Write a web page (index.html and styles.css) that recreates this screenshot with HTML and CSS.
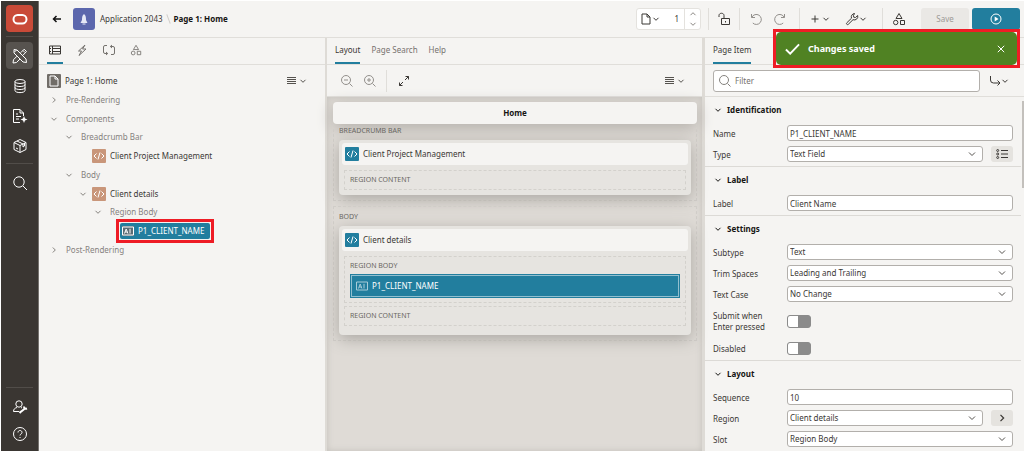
FILE: index.html
```html
<!DOCTYPE html>
<html lang="en">
<head>
	<meta charset="UTF-8">
	<title>Page 1: Home</title>
	<link rel="stylesheet" href="styles.css">
</head>
<body>
	<!-- shared icons -->
	<svg class="sprite">
		<symbol id="chev" viewBox="0 0 8 8"><path d="M1.500 2.800 4 5.300 6.500 2.800"/></symbol>
		<symbol id="chev-right" viewBox="0 0 8 8"><path d="M2.800 1.500 5.300 4 2.800 6.500"/></symbol>
		<symbol id="code" viewBox="0 0 14 14"><path d="M4.500 4.500 2 7l2.500 2.500M9.500 4.500 12 7 9.500 9.500M8 3.500 6 10.500"/></symbol>
		<symbol id="field" viewBox="0 0 12 10"><path d="M.5 1h11v8H.5zM2.500 7.500 4.200 3l1.700 4.500M3.100 6h2.200M8 2.800v4.700"/></symbol>
		<symbol id="lines" viewBox="0 0 9 8"><path d="M0 .5h9M0 2.500h9M0 4.500h9M0 6.500h9"/></symbol>
		<symbol id="shapes" viewBox="0 0 14 14"><path d="M7 1.500 10 6.500H4zM8.500 8.500h4v4h-4z"/><circle cx="3.700" cy="10.500" r="2.200"/></symbol>
	</svg>
	<div class="app">
		<nav class="side">
			<a href="#" class="logo" title="Home"><svg viewBox="0 0 26 26"><rect x="6.500" y="9" width="13" height="8.500" rx="4.200"/></svg></a>
			<hr>
			<a href="#" class="on" title="App Builder"><svg viewBox="0 0 18 18"><path d="M3 2.500 6 3l9 9 .5 3.500L12 15 3 6zM15.500 4.500 13.200 2.200 9.700 5.700M12 8.200l3.500-3.700M6 9.200 2.500 12.700 2 16l3.500-.5L9 12M12 3.500l2 2M3.500 4.500l2-1"/></svg></a>
			<a href="#" title="SQL Workshop"><svg viewBox="0 0 18 18"><ellipse cx="9" cy="4.500" rx="5" ry="2"/><path d="M4 4.500v9c0 2.800 10 2.800 10 0v-9M4 7.500c0 2.700 10 2.700 10 0M4 10.500c0 2.700 10 2.700 10 0"/></svg></a>
			<a href="#" title="Team Development"><svg viewBox="0 0 18 18"><path d="M9 15.500H2.500v-13H9L12.500 6v3M9 2.500V6h3.500M5 7h2M5 9.500h5M5 12h3"/><path class="solid" d="m13 9 1 2.500 2.500 1-2.500 1-1 2.500-1-2.500-2.500-1 2.500-1z"/></svg></a>
			<a href="#" title="Gallery"><svg viewBox="0 0 18 18"><path d="M9 2.500 15 5.500v7l-6 3-6-3v-7zM3 5.500l6 3 6-3M9 8.500v7M6 4l6 3v3l1.500-1V6M5 11l2 1"/></svg></a>
			<hr>
			<a href="#" title="Search"><svg viewBox="0 0 18 18"><circle cx="8" cy="8" r="5.200"/><path d="m12 12 4 4"/></svg></a>
			<span class="fill"></span>
			<hr>
			<a href="#" class="low" title="Administration"><svg viewBox="0 0 18 18"><circle cx="8" cy="6" r="3.200"/><path d="M6 9.500C4 10 2.500 11 2.500 13.500H8M10 9.500l1 .5"/><path class="thick" d="m9 14.500 5-4M13 8.500c0 2 1.500 2.500 3 2M8.500 13.500l1.500 1.500"/></svg></a>
			<a href="#" class="low" title="Help"><svg viewBox="0 0 18 18"><circle cx="9" cy="9" r="6.500"/><path d="M7 7.500c0-2.700 4-2.700 4 0C11 9 9 9 9 10.500M9 12v1"/></svg></a>
		</nav>

		<div class="main">
			<header class="top">
				<button class="plain back" title="Back"><svg viewBox="0 0 10 10"><path d="M9 5H1.500M4.500 2l-3 3 3 3"/></svg></button>
				<span class="rocket"><svg viewBox="0 0 22 22"><path d="M11 6c-2 1.500-2 4-2 6L7.500 15h7L13 12c0-2 0-4.500-2-6zM9.500 15.500h3v1h-3z"/></svg></span>
				<a href="#" class="crumb">Application 2043</a>
				<i class="slash"></i>
				<b class="here">Page 1: Home</b>
				<span class="fill"></span>
				<div class="pager">
					<button class="plain" title="Page finder"><svg class="doc" viewBox="0 0 10 12"><path d="M1 1h5l3 3v7H1zM6 1v3h3"/></svg><svg class="chev"><use href="#chev"/></svg></button>
					<input type="text" value="1" aria-label="Page">
					<span class="spin"><svg class="chev up"><use href="#chev"/></svg><svg class="chev"><use href="#chev"/></svg></span>
				</div>
				<div class="tools">
					<i></i>
					<button class="plain t-lock" title="Page unlocked"><svg viewBox="0 0 14 14"><path d="M4.500 6.500h8v6h-8zM2 5V3.500c0-3 5-3 5 0v3M8.500 9v1.500"/></svg></button>
					<i></i>
					<button class="plain faint t-undo" title="Undo"><svg viewBox="0 0 14 14"><path d="M2.500 2v3.500H6M2.800 5.300a5 5 0 1 1 1 5.700"/></svg></button>
					<button class="plain faint t-redo" title="Redo"><svg viewBox="0 0 14 14"><path d="M11.500 2v3.500H8M11.200 5.300a5 5 0 1 0-1 5.700"/></svg></button>
					<i></i>
					<button class="plain t-add" title="Create"><svg class="plus" viewBox="0 0 8 8"><path d="M4 .5v7M.5 4h7"/></svg><svg class="chev"><use href="#chev"/></svg></button>
					<button class="plain t-util" title="Utilities"><svg viewBox="0 0 14 14"><path d="M9.500 1.500a3.500 3.500 0 0 0-3 4.700L1.800 10.800c-1 1 .6 2.500 1.500 1.500L8 7.700a3.500 3.500 0 0 0 4.700-4.200L10.500 5.500 8.700 5.200 8.500 3.500z"/></svg><svg class="chev"><use href="#chev"/></svg></button>
					<i></i>
					<button class="plain t-shape" title="Shared components"><svg><use href="#shapes"/></svg></button>
				</div>
				<button class="save" disabled>Save</button>
				<button class="run" title="Save and Run"><svg viewBox="0 0 14 14"><circle cx="7" cy="7" r="5"/><path class="solid" d="M5.700 4.500 9.500 7 5.700 9.500z"/></svg></button>
			</header>

			<div class="panes">
				<section class="pane">
					<div class="tabs icons">
						<button class="on" title="Rendering"><svg viewBox="0 0 12 12"><path d="M.5 2h11v8H.5zM3.500 2v8M3.500 4.500h8M3.500 7.500h8M1 4.500h1M1 7.500h1"/></svg></button>
						<button title="Dynamic Actions"><svg viewBox="0 0 12 12"><path d="M9 1 2.500 7h3L3 11.500 10 5H6.500z"/></svg></button>
						<button title="Processing"><svg viewBox="0 0 12 12"><path d="M4 1.500H2A1.500 1.500 0 0 0 .5 3v5A1.500 1.500 0 0 0 2 9.500h2.500M3 8l1.700 1.500L3 11M8 10.500h2A1.500 1.500 0 0 0 11.500 9V4A1.500 1.500 0 0 0 10 2.500H7.500M9 1 7.300 2.500 9 4"/></svg></button>
						<button title="Page Shared Components"><svg viewBox="0 0 14 14"><use href="#shapes" width="14" height="14"/></svg></button>
					</div>
					<div class="tree-box">
						<ul class="tree">
							<li class="root"><span class="page-icon"><svg viewBox="0 0 10 12"><path d="M1 1h5l3 3v7H1zM6 1v3h3"/></svg></span><span class="name">Page 1: Home</span></li>
							<li class="l1"><svg class="tw"><use href="#chev-right"/></svg><span>Pre-Rendering</span></li>
							<li class="l1"><svg class="tw"><use href="#chev"/></svg><span>Components</span></li>
							<li class="l2"><svg class="tw"><use href="#chev"/></svg><span>Breadcrumb Bar</span></li>
							<li class="l3"><span class="tw"></span><svg class="code"><use href="#code"/></svg><span class="name">Client Project Management</span></li>
							<li class="l2"><svg class="tw"><use href="#chev"/></svg><span>Body</span></li>
							<li class="l3"><svg class="tw"><use href="#chev"/></svg><svg class="code"><use href="#code"/></svg><span class="name">Client details</span></li>
							<li class="l4"><svg class="tw"><use href="#chev"/></svg><span>Region Body</span></li>
							<li class="l5"><div class="ring"><a href="#" class="picked"><svg class="field"><use href="#field"/></svg>P1_CLIENT_NAME</a></div></li>
							<li class="l1"><svg class="tw"><use href="#chev-right"/></svg><span>Post-Rendering</span></li>
						</ul>
						<button class="plain menu" title="Tree menu"><svg class="lines"><use href="#lines"/></svg><svg class="chev"><use href="#chev"/></svg></button>
					</div>
				</section>

				<section class="pane center">
					<div class="tabs">
						<button class="on">Layout</button>
						<button>Page Search</button>
						<button>Help</button>
					</div>
					<div class="bar">
						<button class="plain faint" title="Zoom out"><svg viewBox="0 0 14 14"><circle cx="6" cy="6" r="4.500"/><path d="m9.500 9.500 3 3M4 6h4"/></svg></button>
						<button class="plain faint" title="Zoom in"><svg viewBox="0 0 14 14"><circle cx="6" cy="6" r="4.500"/><path d="m9.500 9.500 3 3M4 6h4M6 4v4"/></svg></button>
						<i></i>
						<button class="plain" title="Expand"><svg viewBox="0 0 14 14"><path d="m8 6 3.500-3.500M8.500 2.500h3v3M6 8l-3.500 3.500M2.500 8.500v3h3"/></svg></button>
						<span class="fill"></span>
						<button class="plain menu" title="Layout menu"><svg class="lines"><use href="#lines"/></svg><svg class="chev"><use href="#chev"/></svg></button>
					</div>
					<div class="canvas">
						<div class="page-title">Home</div>
						<div class="slot">
							<div class="cap">BREADCRUMB BAR</div>
							<div class="region">
								<div class="region-head"><svg class="code"><use href="#code"/></svg>Client Project Management</div>
								<div class="sub">REGION CONTENT</div>
							</div>
						</div>
						<div class="slot">
							<div class="cap">BODY</div>
							<div class="region roomy">
								<div class="region-head"><svg class="code"><use href="#code"/></svg>Client details</div>
								<div class="sub">REGION BODY
									<div class="item"><svg class="field"><use href="#field"/></svg>P1_CLIENT_NAME</div>
								</div>
								<div class="sub">REGION CONTENT</div>
							</div>
						</div>
					</div>
				</section>

				<section class="pane props">
					<div class="tabs">
						<button class="on">Page Item</button>
					</div>
					<div class="bar">
						<label class="filter"><svg viewBox="0 0 14 14"><circle cx="6" cy="6" r="4.500"/><path d="m9.500 9.500 3 3"/></svg><input type="text" placeholder="Filter" aria-label="Filter"></label>
						<button class="plain goto" title="Go to group"><svg viewBox="0 0 12 12"><path d="M1.500 1v4a3 3 0 0 0 3 3H11M8.500 5.500 11 8l-2.500 2.500"/></svg><svg class="chev"><use href="#chev"/></svg></button>
					</div>
					<form class="groups">
						<fieldset>
							<h3><svg class="chev"><use href="#chev"/></svg>Identification</h3>
							<div class="row"><label for="name">Name</label><input type="text" id="name" value="P1_CLIENT_NAME"></div>
							<div class="row"><label for="type">Type</label><select id="type"><option>Text Field</option></select><button type="button" class="aux" title="Quick picks"><svg viewBox="0 0 12 10"><path d="M5 1.500h7M5 5h7M5 8.500h7"/><circle cx="1.700" cy="1.500" r="1"/><circle cx="1.700" cy="5" r="1"/><circle cx="1.700" cy="8.500" r="1"/></svg></button></div>
						</fieldset>
						<fieldset>
							<h3><svg class="chev"><use href="#chev"/></svg>Label</h3>
							<div class="row"><label for="label">Label</label><input type="text" id="label" value="Client Name"></div>
						</fieldset>
						<fieldset>
							<h3><svg class="chev"><use href="#chev"/></svg>Settings</h3>
							<div class="row"><label for="subtype">Subtype</label><select id="subtype"><option>Text</option></select></div>
							<div class="row"><label for="trim">Trim Spaces</label><select id="trim"><option>Leading and Trailing</option></select></div>
							<div class="row"><label for="case">Text Case</label><select id="case"><option>No Change</option></select></div>
							<div class="row tall"><label for="submit">Submit when Enter pressed</label><input type="checkbox" id="submit"></div>
							<div class="row"><label for="disabled">Disabled</label><input type="checkbox" id="disabled"></div>
						</fieldset>
						<fieldset>
							<h3><svg class="chev"><use href="#chev"/></svg>Layout</h3>
							<div class="row"><label for="seq">Sequence</label><input type="text" id="seq" value="10"></div>
							<div class="row"><label for="region">Region</label><select id="region"><option>Client details</option></select><button type="button" class="aux" title="Go to region"><svg viewBox="0 0 8 8"><use href="#chev-right"/></svg></button></div>
							<div class="row"><label for="slot">Slot</label><select id="slot"><option>Region Body</option></select></div>
						</fieldset>
					</form>
					<i class="thumb"></i>
				</section>
			</div>
		</div>

		<div class="toast-mark">
			<div class="toast" role="alert">
				<svg class="tick" viewBox="0 0 16 12"><path d="m1 6.500 4.500 4.500L15 1"/></svg>
				<b>Changes saved</b>
				<button class="plain" title="Close"><svg viewBox="0 0 8 8"><path d="m.8.8 6.400 6.400M7.200.8.800 7.200"/></svg></button>
			</div>
		</div>
	</div>
</body>
</html>
```
FILE: styles.css
```css
* {
	box-sizing: border-box;
	margin: 0;
	padding: 0;
}
html, body {
	height: 100%;
}
body {
	padding: 1px 0 1px 1px;
	background: #fff;
	overflow: hidden;
	font: 8px/12px "Noto Sans", sans-serif;
	color: #3b3835;
}
button, input, select {
	font: inherit;
	color: inherit;
}
button {
	border: 0;
	background: none;
}
a {
	color: inherit;
	text-decoration: none;
}
ul {
	list-style: none;
}
svg {
	display: block;
	flex: none;
	fill: none;
	stroke: currentColor;
	stroke-width: 1;
}
.solid {
	fill: currentColor;
	stroke: none;
}
.thick {
	stroke-width: 2;
}
.sprite {
	position: absolute;
	width: 0;
	height: 0;
}
.fill {
	flex: 1;
}
.plain {
	display: flex;
	align-items: center;
	justify-content: center;
}
.faint {
	color: #93908c;
}
.chev {
	width: 8px;
	height: 8px;
}

.app {
	position: relative;
	display: flex;
	height: 100%;
	background: #f5f4f2;
}

/* dark rail */
.side {
	display: flex;
	flex-direction: column;
	align-items: center;
	width: 38px;
	padding: 4px 0;
	background: #3a3632;
	border-right: 1px solid #75726e;
	color: #fff;
}
.side a {
	display: flex;
	align-items: center;
	justify-content: center;
	width: 27px;
	height: 27px;
	margin-bottom: 3px;
	border-radius: 4px;
}
.side .low {
	margin-bottom: 0;
}
.side svg {
	width: 18px;
	height: 18px;
}
.side hr {
	width: 27px;
	border: 0;
	border-top: 1px solid #514d49;
	margin: 1px 0 5px;
}
.side .logo {
	background: #c94a38;
}
.side .logo svg {
	width: 26px;
	height: 26px;
	stroke-width: 2;
}
.side .on {
	background: #57534f;
}

.main {
	display: flex;
	flex: 1;
	flex-direction: column;
	min-width: 0;
}

/* header */
.top {
	display: flex;
	align-items: center;
	height: 37px;
	padding: 0 4px 0 13px;
	border-bottom: 1px solid #e0deda;
}
.back svg {
	width: 10px;
	height: 10px;
	stroke: #111;
	stroke-width: 1.500;
}
.rocket {
	margin: 0 5px 0 11px;
	background: #5c67ad;
	border-radius: 3px;
}
.rocket svg {
	width: 22px;
	height: 22px;
	fill: #e6e8f6;
	stroke: none;
}
.slash {
	width: 1px;
	height: 10px;
	margin: 0 5px;
	background: #d0cdc9;
	transform: rotate(-20deg);
}
.here {
	color: #161513;
}
.pager {
	display: flex;
	height: 22px;
	background: #fff;
	border: 1px solid #e4e2de;
	border-radius: 3px;
}
.pager button {
	width: 27px;
	gap: 1px;
}
.doc {
	width: 10px;
	height: 12px;
}
.pager input {
	width: 20px;
	border: 0;
	background: none;
	text-align: right;
	padding-right: 5px;
}
.spin {
	display: flex;
	flex-direction: column;
	align-items: center;
	justify-content: space-around;
	width: 16px;
	border-left: 1px solid #e4e2de;
	color: #8a8783;
}
.up {
	transform: scaleY(-1);
}
.tools {
	display: flex;
	align-items: center;
	margin: 0 6px 0 7px;
}
.tools i, .bar i {
	flex: none;
	width: 1px;
	height: 22px;
	background: #e0deda;
}
.tools svg {
	width: 14px;
	height: 14px;
}
.tools .chev, .tools .plus {
	width: 8px;
	height: 8px;
}
.t-lock {
	width: 30px;
}
.t-undo, .t-redo {
	width: 24px;
}
.t-undo {
	margin-left: 4px;
}
.t-redo {
	margin-right: 7px;
}
.t-add {
	gap: 3px;
	width: 40px;
}
.t-util {
	width: 32px;
	margin-right: 10px;
}
.t-shape {
	width: 32px;
}
.save, .run {
	width: 48px;
	height: 22px;
	border-radius: 3px;
}
.save {
	margin-right: 3px;
	background: #eae8e5;
	color: #9d9a96;
}
.run {
	display: flex;
	align-items: center;
	justify-content: center;
	background: #227e9e;
	color: #fff;
}
.run svg {
	width: 14px;
	height: 14px;
}

/* three panes */
.panes {
	display: grid;
	flex: 1;
	grid-template-columns: 286fr 380fr 319fr;
	min-height: 0;
}
.pane {
	display: flex;
	flex-direction: column;
	min-width: 0;
	min-height: 0;
}
.center {
	border: solid #dedbd6;
	border-width: 0 3px 0 2px;
}
.tabs {
	display: flex;
	flex: none;
	gap: 11px;
	height: 27px;
	padding: 0 8px;
	border-bottom: 1px solid #e0deda;
	color: #75726e;
}
.tabs button {
	border-bottom: 2px solid transparent;
}
.tabs .on {
	border-color: #227e9e;
	color: #3b3835;
}
.icons button {
	display: flex;
	align-items: center;
	justify-content: center;
	width: 16px;
}
.icons svg {
	width: 12px;
	height: 12px;
}
.bar {
	display: flex;
	flex: none;
	align-items: center;
	height: 32px;
	padding: 0 8px;
	border-bottom: 1px solid #e0deda;
}

/* tree */
.tree-box {
	display: flex;
	align-items: flex-start;
	padding: 7px 18px 0 0;
}
.tree {
	display: grid;
	flex: 1;
	grid-auto-rows: 1fr;
	height: 187px;
	color: #85827e;
}
.tree li {
	display: flex;
	align-items: center;
	min-height: 0;
	padding-left: 8px;
}
.tree span:last-child {
	padding-left: 5px;
}
.tree .root span:last-child, .tree .code + span {
	padding-left: 4px;
}
.tree .l2 {
	padding-left: 23px;
}
.tree .l3 {
	padding-left: 37px;
}
.tree .l4 {
	padding-left: 52px;
}
.tree .l5 {
	padding-left: 77px;
}
.tw {
	width: 14px;
	height: 8px;
}
.tree .name {
	color: #3b3835;
}
.page-icon {
	padding: 1px 2px;
	background: #716d68;
	border-radius: 1px;
	color: #fff;
}
.page-icon svg {
	width: 10px;
	height: 12px;
}
.code {
	width: 14px;
	height: 14px;
	background: #c9967a;
	border-radius: 1px;
	color: #fff;
}
.tree .code {
	margin-left: 2px;
}
.field {
	width: 12px;
	height: 10px;
}
/* chosen node, ringed in red */
.ring {
	flex: none;
	padding: 1px;
	border: 3px solid #ee1c25;
}
.picked {
	display: flex;
	align-items: center;
	gap: 4px;
	height: 16px;
	padding: 0 6px 0 2px;
	background: #227e9e;
	border-radius: 2px;
	color: #fff;
}
.picked .field {
	background: #5b6c74;
}
.menu {
	gap: 3px;
	height: 18px;
	color: #55524e;
}
.lines {
	width: 9px;
	height: 8px;
}

/* layout canvas */
.center .bar button {
	width: 23px;
}
.center .bar button svg {
	width: 14px;
	height: 14px;
}
.center .bar i {
	margin: 0 5px;
}
.center .bar .menu {
	width: auto;
	margin-right: 9px;
}
.center .bar .menu .lines {
	width: 9px;
	height: 8px;
}
.center .bar .menu .chev {
	width: 8px;
	height: 8px;
}
.canvas {
	flex: 1;
	padding: 5px 5px 5px 6px;
	background: #dfdbd6;
	box-shadow: inset 0 0 6px #c3c0bb;
}
.page-title {
	height: 22px;
	background: #f5f4f2;
	border-radius: 4px;
	box-shadow: 0 4px 16px #b3afaa;
	color: #161513;
	font-weight: bold;
	line-height: 22px;
	text-align: center;
}
.slot {
	padding: 2px 5px 5px;
	margin-bottom: 5px;
	border: 1px dashed #d0cdc8;
	border-top: 0;
}
.slot + .slot {
	padding-top: 5px;
	border-top: 1px dashed #d0cdc8;
}
.cap, .sub {
	font-size: 7px;
	line-height: 10px;
	color: #6a6763;
}
.cap {
	position: relative;
	margin-bottom: 4px;
}
.region {
	padding: 3px 3px 2px;
	background: #e6e4e0;
	border-radius: 4px;
	box-shadow: 0 4px 16px #aaa7a2;
}
.roomy {
	padding-bottom: 6px;
}
.region-head {
	display: flex;
	align-items: center;
	gap: 4px;
	height: 22px;
	padding: 0 3px;
	margin-bottom: 5px;
	background: #f5f4f2;
	border-radius: 3px;
}
.region-head .code {
	background: #227e9e;
}
.sub {
	padding: 4px 5px;
	margin: 0 2px 3px;
	border: 1px dashed #d3d1cc;
}
.item {
	display: flex;
	align-items: center;
	gap: 4px;
	height: 24px;
	padding: 0 5px;
	margin-top: 3px;
	background: #227e9e;
	border: 1px solid #227e9e;
	box-shadow: inset 0 0 0 1px #91bfcf;
	color: #fff;
	font-size: 8px;
}
.item .field {
	color: #a7ccd8;
}

/* property editor */
.props {
	position: relative;
}
.filter {
	display: flex;
	flex: 1;
	align-items: center;
	gap: 3px;
	height: 22px;
	padding: 0 4px;
	background: #fff;
	border: 1px solid #b2afab;
	border-radius: 3px;
	color: #85827e;
}
.filter svg {
	width: 14px;
	height: 14px;
}
.filter input {
	flex: 1;
	min-width: 0;
	border: 0;
	background: none;
}
.filter input::placeholder {
	color: #75726e;
}
.goto {
	width: 34px;
	margin-left: 2px;
}
.goto svg:first-child {
	width: 12px;
	height: 12px;
}
.groups {
	flex: 1;
	min-height: 0;
	margin-right: 3px;
	overflow: hidden;
}
fieldset {
	display: flex;
	flex-direction: column;
	gap: 5px;
	padding-bottom: 4px;
	border: 0;
	border-bottom: 1px solid #dcdad6;
}
h3 {
	display: flex;
	align-items: center;
	gap: 5px;
	height: 23px;
	padding: 3px 9px 0;
	color: #161513;
	font-size: 8px;
}
.row {
	display: flex;
	align-items: center;
	height: 16px;
	padding: 0 8px;
}
.row.tall {
	height: 28px;
}
.row label {
	flex: none;
	width: 74px;
	padding-right: 14px;
	line-height: 11px;
}
.row input[type=text], .row select {
	flex: 1;
	min-width: 0;
	height: 16px;
	padding: 0 2px;
	background: #fff;
	border: 1px solid #b2afab;
	border-radius: 3px;
}
.row select {
	appearance: none;
	background: #fff url("data:image/svg+xml,%3Csvg xmlns='http://www.w3.org/2000/svg' viewBox='0 0 8 8'%3E%3Cpath d='M1 2.500 4 5.500 7 2.500' fill='none' stroke='%2355524e'/%3E%3C/svg%3E") no-repeat right 6px center / 8px;
}
.row input[type=checkbox] {
	appearance: none;
	width: 24px;
	height: 13px;
	background: linear-gradient(#fff, #fff) no-repeat 0 0 / 10px 11px #8b8b8b;
	border: 1px solid #8b8b8b;
	border-radius: 3px;
}
.aux {
	display: flex;
	align-items: center;
	justify-content: center;
	width: 22px;
	height: 16px;
	margin-left: 8px;
	background: #e5e3df;
	border-radius: 3px;
}
.aux svg {
	width: 12px;
	height: 10px;
}
.thumb {
	position: absolute;
	top: 63px;
	right: 0;
	width: 2px;
	height: 87px;
	background: #c3c0bc;
}

/* toast over the header, ringed in red */
.toast-mark {
	position: absolute;
	top: 28px;
	right: 4px;
	width: 247px;
	background: #f5f4f2;
	border: 3px solid #ee1c25;
}
.toast {
	display: flex;
	align-items: center;
	height: 33px;
	padding: 0 12px 0 9px;
	background: #508223;
	border-radius: 5px;
	color: #fff;
}
.tick {
	width: 15px;
	height: 12px;
	margin-right: 8px;
	stroke-width: 2;
}
.toast b {
	flex: 1;
	font-size: 9px;
}
.toast button svg {
	width: 8px;
	height: 8px;
}
```
